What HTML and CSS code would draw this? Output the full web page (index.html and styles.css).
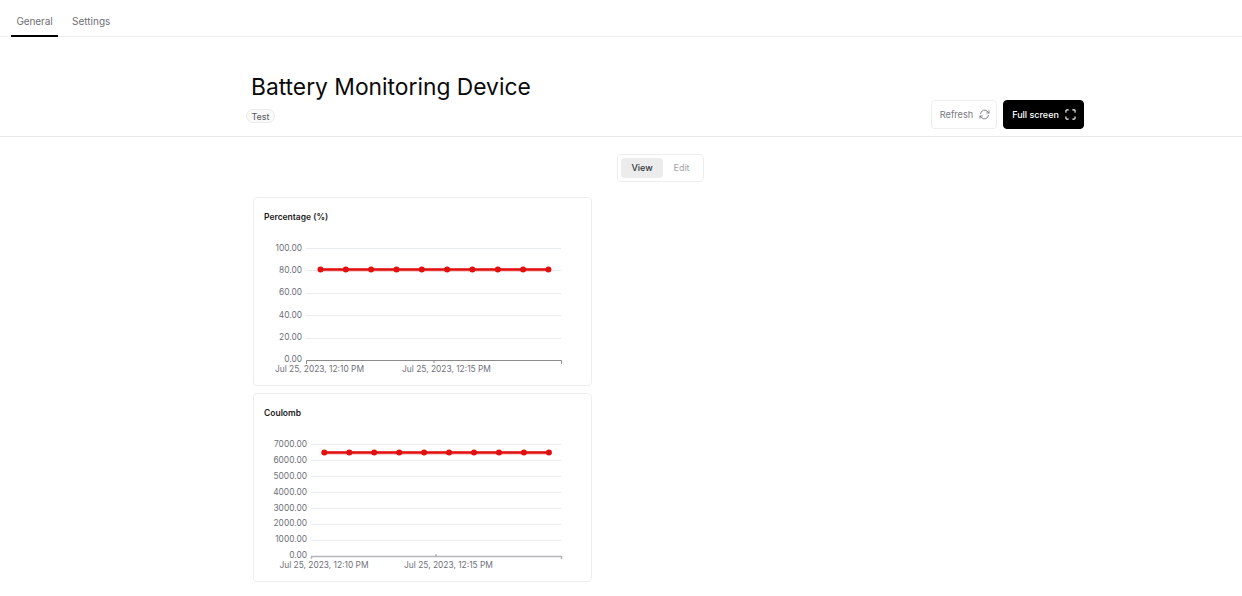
FILE: index.html
```html
<!DOCTYPE html>
<html lang="en">
<head>
<meta charset="utf-8">
<title>Battery Monitoring Device</title>
<link rel="stylesheet" href="styles.css">
</head>
<body>
<nav class="tabs">
  <a class="tab active">General</a>
  <a class="tab">Settings</a>
</nav>
<header class="head">
  <div class="head-main">
    <h1 class="title">Battery Monitoring Device</h1>
    <span class="badge">Test</span>
  </div>
  <div class="actions">
    <button class="btn btn-light">Refresh
      <svg class="icon" viewBox="0 0 12 12" fill="none" stroke="currentColor" stroke-width="1" stroke-linecap="round" stroke-linejoin="round"><path d="M1.6 5A4.5 4.5 0 0 1 9.6 3L10.8 4.2"/><path d="M10.9 1.900V4.400H8.400"/><path d="M10.400 7A4.500 4.500 0 0 1 2.400 9L1.200 7.800"/><path d="M1.100 10.100V7.600H3.600"/></svg>
    </button>
    <button class="btn btn-dark">Full screen
      <svg class="icon icon-fs" viewBox="0 0 12 12" fill="none" stroke="currentColor" stroke-width="1.200" stroke-linecap="round" stroke-linejoin="round"><path d="M1 3.500V2A1 1 0 0 1 2 1H3.500"/><path d="M8.500 1H10A1 1 0 0 1 11 2V3.500"/><path d="M11 8.500V10A1 1 0 0 1 10 11H8.500"/><path d="M3.500 11H2A1 1 0 0 1 1 10V8.500"/></svg>
    </button>
  </div>
</header>
<div class="seg-wrap">
  <div class="seg">
    <span class="seg-item on">View</span>
    <span class="seg-item">Edit</span>
  </div>
</div>
<main class="cards">
  <section class="card">
    <h2 class="card-title">Percentage (%)</h2>
    <svg class="chart" viewBox="0 0 339 160" width="339" height="160">
      <g class="grid">
        <path d="M53 33.500H308M53 55.500H308M53 78.500H308M53 100.500H308M53 123.500H308"/>
      </g>
      <g class="ylabels">
        <text x="49" y="35.500">100.00</text>
        <text x="49" y="57.500">80.00</text>
        <text x="49" y="80">60.00</text>
        <text x="49" y="102.500">40.00</text>
        <text x="49" y="125">20.00</text>
        <text x="49" y="147">0.00</text>
      </g>
      <path class="axis" d="M53.500 149V145.500H308.500V149M181 145.500V148"/>
      <text class="xlabel" x="66.500" y="156.500">Jul 25, 2023, 12:10 PM</text>
      <text class="xlabel" x="193.500" y="156.500">Jul 25, 2023, 12:15 PM</text>
      <path class="halo" d="M67 55H295"/>
      <path class="line" d="M67 54.500H295"/>
      <g class="dots">
        <circle cx="67.500" cy="54.500" r="3"/><circle cx="92.800" cy="54.500" r="3"/><circle cx="118.100" cy="54.500" r="3"/><circle cx="143.500" cy="54.500" r="3"/><circle cx="168.800" cy="54.500" r="3"/><circle cx="194.100" cy="54.500" r="3"/><circle cx="219.400" cy="54.500" r="3"/><circle cx="244.800" cy="54.500" r="3"/><circle cx="270.100" cy="54.500" r="3"/><circle cx="295.400" cy="54.500" r="3"/>
      </g>
    </svg>
  </section>
  <section class="card">
    <h2 class="card-title">Coulomb</h2>
    <svg class="chart" viewBox="0 0 339 160" width="339" height="160">
      <g class="grid">
        <path d="M58 33.500H308M58 49.500H308M58 65.500H308M58 81.500H308M58 97.500H308M58 113.500H308M58 129.500H308"/>
      </g>
      <g class="ylabels">
        <text x="54" y="35.500">7000.00</text>
        <text x="54" y="51.500">6000.00</text>
        <text x="54" y="67.500">5000.00</text>
        <text x="54" y="83.500">4000.00</text>
        <text x="54" y="99.500">3000.00</text>
        <text x="54" y="115">2000.00</text>
        <text x="54" y="131">1000.00</text>
        <text x="54" y="147">0.00</text>
      </g>
      <path class="axis axis-thick" d="M58.500 148V145.500H308.500V148M183 145.500V143"/>
      <text class="xlabel" x="71" y="156.500">Jul 25, 2023, 12:10 PM</text>
      <text class="xlabel" x="195.500" y="156.500">Jul 25, 2023, 12:15 PM</text>
      <path class="halo" d="M71 42H296"/>
      <path class="line" d="M71 41.500H296"/>
      <g class="dots">
        <circle cx="71.300" cy="41.500" r="3"/><circle cx="96.300" cy="41.500" r="3"/><circle cx="121.200" cy="41.500" r="3"/><circle cx="146.200" cy="41.500" r="3"/><circle cx="171.100" cy="41.500" r="3"/><circle cx="196.100" cy="41.500" r="3"/><circle cx="221" cy="41.500" r="3"/><circle cx="246" cy="41.500" r="3"/><circle cx="270.900" cy="41.500" r="3"/><circle cx="295.900" cy="41.500" r="3"/>
      </g>
    </svg>
  </section>
</main>
</body>
</html>
```
FILE: styles.css
```css
* { box-sizing: border-box; }
html, body { margin: 0; padding: 0; }
body {
  width: 1242px;
  height: 596px;
  overflow: hidden;
  background: #fff;
  color: #000;
  font-family: Inter, "Liberation Sans", sans-serif;
}
.tabs {
  display: flex;
  height: 37px;
  padding-left: 11px;
  border-bottom: 1px solid #eeeeee;
}
.tab {
  flex: none;
  width: 47px;
  height: 37px;
  padding-top: 13px;
  font-size: 10px;
  line-height: 17px;
  letter-spacing: -0.1px;
  color: #6f6f76;
  text-align: center;
  white-space: nowrap;
}
.tab + .tab { width: 38px; margin-left: 14px; letter-spacing: 0; }
.tab.active { border-bottom: 2px solid #000; }
.head {
  display: flex;
  justify-content: space-between;
  align-items: flex-end;
  height: 100px;
  padding: 0 158px 7px 246px;
  border-bottom: 1px solid #e8e8e8;
}
.head-main { display: flex; flex-direction: column; align-items: flex-start; }
.title {
  margin: 0 0 6px 5px;
  font-size: 22.800px;
  line-height: 32px;
  font-weight: 400;
  color: #0a0a0a;
}
.badge {
  height: 14px;
  width: 29px;
  margin-bottom: 6px;
  font-size: 9px;
  line-height: 13px;
  text-align: center;
  color: #55555c;
  background: #fafafa;
  border: 1px solid #ececec;
  border-radius: 7px;
}
.actions { display: flex; gap: 6px; }
.btn {
  display: flex;
  align-items: center;
  justify-content: center;
  gap: 6px;
  height: 29px;
  border-radius: 4px;
  padding: 0 0 1px;
  font-family: inherit;
  font-size: 9.200px;
}
.btn-light { width: 66px; padding-left: 2px; background: #fff; border: 1px solid #eeeeee; color: #77777e; }
.btn-dark { width: 81px; padding-left: 1px; background: #000; border: 1px solid #000; color: #fff; font-size: 9px; font-weight: 500; gap: 6px; }
.icon { width: 11px; height: 11px; }
.seg-wrap { display: flex; justify-content: center; padding: 17px 0 15px 79px; }
.seg {
  display: flex;
  width: 87px;
  height: 28px;
  padding: 3px;
  background: #fff;
  border: 1px solid #eeeeee;
  border-radius: 4px;
}
.seg-item {
  flex: none;
  width: 37px;
  height: 20px;
  font-size: 9px;
  line-height: 20px;
  text-align: center;
  color: #a4a4a8;
  border-radius: 4px;
}
.seg-item.on { width: 42px; background: #ececec; color: #333338; font-weight: 500; }
.cards {
  display: flex;
  flex-direction: column;
  gap: 7px;
  width: 339px;
  margin-left: 253px;
}
.card {
  height: 189px;
  border: 1px solid #eeeeee;
  border-radius: 4px;
  background: #fff;
}
.card-title {
  margin: 0;
  height: 17px;
  padding: 13px 0 0 10px;
  font-size: 8.500px;
  line-height: 13px;
  font-weight: 600;
  color: #1c1c22;
}
.chart { display: block; margin: 0 -1px; overflow: visible; }
.grid path { stroke: #e8ebf2; stroke-width: 1; fill: none; }
.axis { stroke: #8a8a8a; stroke-width: 1; fill: none; }
.axis-thick { stroke: #b5b5bb; stroke-width: 1.500; }
.ylabels text { font-size: 8.400px; fill: #6e7079; text-anchor: end; }
.xlabel { font-size: 8.400px; fill: #6e7079; text-anchor: middle; }
.halo { stroke: #f4a3a3; stroke-width: 4; fill: none; opacity: 0.5; }
.line { stroke: #e20f0f; stroke-width: 2.500; fill: none; }
.dots circle { fill: #e20f0f; }
```
